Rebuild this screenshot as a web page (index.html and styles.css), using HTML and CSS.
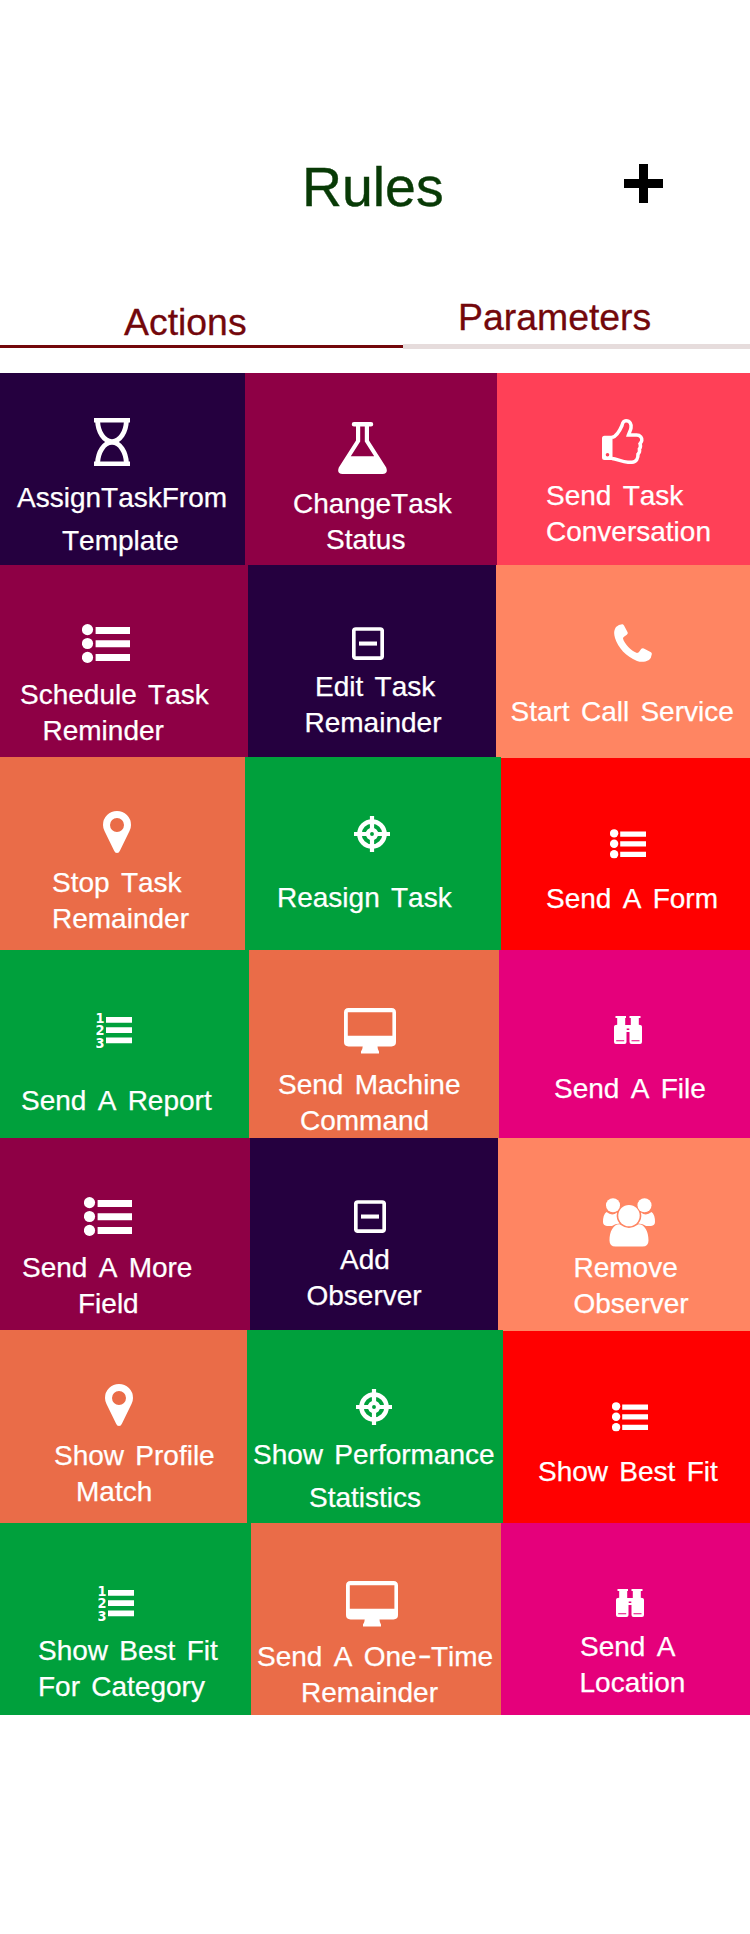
FILE: index.html
```html
<!DOCTYPE html>
<html lang="en">
<head>
<meta charset="utf-8">
<title>Rules</title>
<link rel="stylesheet" href="styles.css">
</head>
<body>
<svg class="sprite" aria-hidden="true">
  <symbol id="hourglass" viewBox="0 0 36 48"><path d="M0 0H36V4.6H0ZM0 43.4H36V48H0Z"/><path class="line" stroke-width="4.900" d="M3.6 3C4 14 10 23.6 18 23.6S32 14 32.4 3M3.6 45C4 34 10 24.4 18 24.4S32 34 32.4 45"/></symbol>
  <symbol id="flask" viewBox="0 0 49 52"><path fill-rule="evenodd" d="M16 0H33A2.2 2.2 0 0 1 33 4.5H31V18.5L48.2 45.5Q50.5 52 44.5 52H4.5Q-1.5 52 .8 45.5L18 18.5V4.5H16A2.2 2.2 0 0 1 16 0ZM22.2 4.5V19.5L12.8 34.3H36.2L26.8 19.5V4.5Z"/></symbol>
  <symbol id="thumb" viewBox="0 0 42 45"><path fill-rule="evenodd" d="M2.5 16.7H10.5V41H2.5Q0 41 0 38.5V19.2Q0 16.7 2.5 16.7ZM5.5 33.9A1.8 1.8 0 1 0 5.5 37.5A1.8 1.8 0 1 0 5.5 33.9Z"/><path class="line" stroke-width="3.500" d="M10 18.5C14.5 17.5 18.5 10 20 6.5C20.6 3.5 21.5 1.8 24 1.8C28 1.8 29.6 5 29 9C28.6 11.5 27 14 26.4 16H34.5C38.5 16 40.2 19 39.800 21.5C39.5 23.2 38.4 24 38 24.6C38.8 26.6 38.5 28.6 37.4 30C37.9 32 37.2 34 36 35.2C36.2 38.8 34.5 43.2 30 43.2H26C20 43.2 15 39.9 10 39.5"/></symbol>
  <symbol id="list" viewBox="0 0 48 39"><circle cx="5.5" cy="5.6" r="5.6"/><circle cx="5.5" cy="19.5" r="5.6"/><circle cx="5.5" cy="33.4" r="5.6"/><path d="M13.6 3H48V10H13.6ZM13.6 16.2H48V23.2H13.6ZM13.6 30H48V37H13.6Z"/></symbol>
  <symbol id="minus" viewBox="0 0 32 33"><rect class="line" stroke-width="3.700" x="1.8" y="2" width="28.4" height="29.2" rx="2"/><path d="M7 14.5H25V18.6H7Z"/></symbol>
  <symbol id="phone" viewBox="0 0 38 38"><path d="M2 3Q5 0 8.6 .2Q9.5 .4 10 1.4L13.6 8.2Q14 9.2 13.4 10C12 11.8 9 12.6 9 14.6C10 19.5 17.5 27.5 23 29C25.2 29 26 26 27.8 24.6Q28.8 23.8 29.8 24.4L37 28.2Q38 28.8 37.8 30.2Q37.3 34 35 36C31 38 27.5 38.5 23 37C12 32.5 4 23.5 1 14C-.3 9.5 -.2 6.5 2 3Z"/></symbol>
  <symbol id="pin" viewBox="0 0 28 42"><path fill-rule="evenodd" d="M14 0A14 14 0 0 1 28 14Q28 17 26.5 20L17 39.5Q16 42 14 42T11 39.5L1.5 20Q0 17 0 14A14 14 0 0 1 14 0ZM14 7A7 7 0 1 0 14 21A7 7 0 1 0 14 7Z"/></symbol>
  <symbol id="target" viewBox="0 0 36 36"><circle class="line" stroke-width="4.500" cx="18" cy="18" r="12.6"/><circle class="line" stroke-width="4.300" cx="18" cy="18" r="4.100"/><path d="M15.900 0H20.100V14H15.900ZM15.900 22H20.100V36H15.900ZM0 15.900H14V20.100H0ZM22 15.900H36V20.100H22Z"/></symbol>
  <symbol id="numbers" viewBox="0 0 36 37"><path d="M10 5H36V10.7H10ZM10 15.3H36V21H10ZM10 25.5H36V31.2H10Z"/><text class="digit" x="-.5" y="10.900" textLength="9" lengthAdjust="spacingAndGlyphs">1</text><text class="digit" x="-.5" y="23.400" textLength="9" lengthAdjust="spacingAndGlyphs">2</text><text class="digit" x="-.5" y="36.300" textLength="9" lengthAdjust="spacingAndGlyphs">3</text></symbol>
  <symbol id="monitor" viewBox="0 0 52 46"><path fill-rule="evenodd" d="M4.500 0H47.500Q52 0 52 4.500V34Q52 38.400 47.500 38.400H33.500Q33.500 41 35 43.500V45.500H17V43.500Q18.700 41 18.700 38.400H4.500Q0 38.400 0 34V4.500Q0 0 4.500 0ZM3.800 4.200V27.800H48.400V4.200Z"/></symbol>
  <symbol id="binoculars" viewBox="0 0 28 28"><path fill-rule="evenodd" d="M1.500 0H12V2H11.200V9H16.800V2H15.500V0H26.500V2H24.800V8.700Q28 8.700 28 11V26Q28 28 26 28H17.500Q15.500 28 15.500 26V16H12.500V26Q12.500 28 10.500 28H2Q0 28 0 26V11Q0 8.700 3.200 8.700V2H1.500ZM2.200 24.300V25.200H10.200V24.300ZM17.500 24.300V25.200H25.500V24.300ZM12.700 12.500V14H15.300V12.500Z"/></symbol>
  <symbol id="users" viewBox="0 0 52 49"><circle cx="10" cy="7.200" r="7"/><circle cx="41.500" cy="7.200" r="7"/><circle cx="26" cy="17.600" r="10.700"/><path d="M3.500 14Q9 18.500 14 14.500Q12.700 21 16.700 25.500Q12 25.500 9 28H4Q0 27.500 0 24Q0 16.500 3.500 14ZM48.500 14Q43 18.500 38 14.500Q39.300 21 35.300 25.500Q40 25.500 43 28H48Q52 27.500 52 24Q52 16.500 48.500 14ZM16.500 26.300Q26 33.500 35.500 26.300C42 26.300 45.500 34 45.500 42.500Q45.500 48.500 39.500 48.500H12.500Q6.500 48.500 6.500 42.500C6.500 34 10 26.300 16.500 26.300Z"/></symbol>
  <symbol id="plus" viewBox="0 0 39 39"><path d="M15 0H24V15H39V24H24V39H15V24H0V15H15Z"/></symbol>
</svg>

<header class="header">
  <h1 class="title">Rules</h1>
  <svg class="add"><use href="#plus"/></svg>
</header>
<nav class="tabs">
  <div class="tab active">Actions</div>
  <div class="tab inactive">Parameters</div>
</nav>

<main class="board">
  <div class="row row-1">
    <div class="tile navy assign"><svg class="icon"><use href="#hourglass"/></svg><div class="label"><div>AssignTaskFrom</div><div>Template</div></div></div>
    <div class="tile maroon change"><svg class="icon"><use href="#flask"/></svg><div class="label"><div>ChangeTask</div><div>Status</div></div></div>
    <div class="tile coral conversation"><svg class="icon"><use href="#thumb"/></svg><div class="label"><div>Send Task</div><div>Conversation</div></div></div>
  </div>
  <div class="row row-2">
    <div class="tile maroon schedule"><svg class="icon"><use href="#list"/></svg><div class="label"><div>Schedule Task</div><div>Reminder</div></div></div>
    <div class="tile navy edit"><svg class="icon"><use href="#minus"/></svg><div class="label"><div>Edit Task</div><div>Remainder</div></div></div>
    <div class="tile salmon call"><svg class="icon"><use href="#phone"/></svg><div class="label"><div>Start Call Service</div></div></div>
  </div>
  <div class="row row-3">
    <div class="tile orange stop"><svg class="icon"><use href="#pin"/></svg><div class="label"><div>Stop Task</div><div>Remainder</div></div></div>
    <div class="tile green reassign"><svg class="icon"><use href="#target"/></svg><div class="label"><div>Reasign Task</div></div></div>
    <div class="tile red form"><svg class="icon"><use href="#list"/></svg><div class="label"><div>Send A Form</div></div></div>
  </div>
  <div class="row row-4">
    <div class="tile green report"><svg class="icon"><use href="#numbers"/></svg><div class="label"><div>Send A Report</div></div></div>
    <div class="tile orange machine"><svg class="icon"><use href="#monitor"/></svg><div class="label"><div>Send Machine</div><div>Command</div></div></div>
    <div class="tile magenta file"><svg class="icon"><use href="#binoculars"/></svg><div class="label"><div>Send A File</div></div></div>
  </div>
  <div class="row row-5">
    <div class="tile maroon field"><svg class="icon"><use href="#list"/></svg><div class="label"><div>Send A More</div><div>Field</div></div></div>
    <div class="tile navy add-observer"><svg class="icon"><use href="#minus"/></svg><div class="label"><div>Add</div><div>Observer</div></div></div>
    <div class="tile salmon remove-observer"><svg class="icon"><use href="#users"/></svg><div class="label"><div>Remove</div><div>Observer</div></div></div>
  </div>
  <div class="row row-6">
    <div class="tile orange profile"><svg class="icon"><use href="#pin"/></svg><div class="label"><div>Show Profile</div><div>Match</div></div></div>
    <div class="tile green performance"><svg class="icon"><use href="#target"/></svg><div class="label"><div>Show Performance</div><div>Statistics</div></div></div>
    <div class="tile red best-fit"><svg class="icon"><use href="#list"/></svg><div class="label"><div>Show Best Fit</div></div></div>
  </div>
  <div class="row row-7">
    <div class="tile green category"><svg class="icon"><use href="#numbers"/></svg><div class="label"><div>Show Best Fit</div><div>For Category</div></div></div>
    <div class="tile orange one-time"><svg class="icon"><use href="#monitor"/></svg><div class="label"><div>Send A One<span class="dash">-</span>Time</div><div>Remainder</div></div></div>
    <div class="tile magenta location"><svg class="icon"><use href="#binoculars"/></svg><div class="label"><div>Send A</div><div>Location</div></div></div>
  </div>
</main>
</body>
</html>
```
FILE: styles.css
```css
* { box-sizing: border-box; }
body {
  margin: 0;
  min-height: 1934px;
  background: #fff;
  font-family: "Liberation Sans", Arial, sans-serif;
  font-kerning: none;
}
.sprite { display: none; }
.line { fill: none; stroke: currentColor; }
.digit { font: bold 14.6px "DejaVu Sans", sans-serif; }

.header {
  display: flex;
  align-items: flex-start;
  height: 290px;
  padding: 157px 0 0 302px;
}
.title {
  width: 322px;
  margin: 0;
  font-size: 55.4px;
  line-height: 60px;
  font-weight: 400;
  color: #083a06;
  -webkit-text-stroke: 0.4px currentColor;
}
.add { width: 39px; height: 39px; margin-top: 7px; fill: #000; }

.tabs {
  display: flex;
  align-items: flex-end;
  height: 83px;
  padding-bottom: 24px;
  color: #73070b;
  font-size: 37.4px;
  line-height: 42px;
  -webkit-text-stroke: 0.3px currentColor;
}
.tab { height: 48px; }
.active {
  width: 403px;
  height: 43px;
  margin-bottom: 1px;
  padding-left: 124px;
  box-shadow: inset 0 -3px #73070b;
  line-height: 34px;
}
.inactive {
  width: 347px;
  padding-left: 55px;
  border-bottom: 5px solid #e6dcdc;
  line-height: 33px;
}

.row { display: grid; height: 192px; }
.row-1 { grid-template-columns: 245px 252px 1fr; }
.row-2 { grid-template-columns: 248px 248px 1fr; }
.row-3 { grid-template-columns: 245px 256px 1fr; height: 193px; background: #ff8562; }
.row-4 { grid-template-columns: 249px 250px 1fr; height: 188px; }
.row-5 { grid-template-columns: 250px 248px 1fr; }
.row-6 { grid-template-columns: 247px 256px 1fr; height: 193px; background: #ff8562; }
.row-7 { grid-template-columns: 251px 250px 1fr; }
.row-3 .red, .row-6 .red { margin-top: 1px; }

.navy { background: #25003f; }
.maroon { background: #8e0045; }
.coral { background: #ff4057; }
.salmon { background: #ff8562; }
.orange { background: #ea6c48; }
.green { background: #00a03c; }
.red { background: #f00; }
.magenta { background: #e5007b; }

.tile {
  display: grid;
  grid-template-rows: var(--head) auto;
  align-content: start;
  color: #fff;
  font-size: 28px;
  line-height: 36px;
  word-spacing: 3.5px;
  white-space: nowrap;
}
.icon {
  width: var(--w);
  height: var(--h);
  margin: var(--iy) 0 0 var(--ix);
  fill: currentColor;
}
.label { padding-top: 1px; -webkit-text-stroke: 0.25px currentColor; }
.label div:first-child { padding-left: var(--a); }
.label div:last-child { padding-left: var(--b, var(--a)); }
.dash { display: inline-block; margin: 0 2px 0 3px; transform: scaleX(1.5) translateY(-2px); }

.assign { --w: 36px; --h: 48px; --ix: 94px; --iy: 45px; --head: 106px; --a: 17px; --b: 62px; }
.assign .label div:last-child, .performance .label div:last-child { margin-top: 7px; }
.change { --w: 49px; --h: 52px; --ix: 92.5px; --iy: 49px; --head: 112px; --a: 48px; --b: 81px; }
.conversation { --w: 42px; --h: 45px; --ix: 105px; --iy: 46px; --head: 104px; --a: 49px; }
.schedule { --w: 48px; --h: 39px; --ix: 82px; --iy: 59px; --head: 111px; --a: 20px; --b: 42.5px; }
.edit { --w: 32px; --h: 33px; --ix: 104px; --iy: 62px; --head: 103px; --a: 67px; --b: 56.5px; }
.call { --w: 38px; --h: 38px; --ix: 118px; --iy: 59px; --head: 128px; --a: 14.5px; }
.stop { --w: 28px; --h: 42px; --ix: 103px; --iy: 54px; --head: 107px; --a: 52px; }
.reassign { --w: 36px; --h: 36px; --ix: 109px; --iy: 59px; --head: 122px; --a: 32px; }
.form { --w: 36px; --h: 29.5px; --ix: 109px; --iy: 71px; --head: 122px; --a: 45px; }
.report { --w: 36px; --h: 37px; --ix: 96px; --iy: 62px; --head: 132px; --a: 21px; }
.machine { --w: 52px; --h: 46px; --ix: 95px; --iy: 58px; --head: 116px; --a: 29px; --b: 51px; }
.file { --w: 28px; --h: 28px; --ix: 115px; --iy: 66px; --head: 120px; --a: 55px; }
.field { --w: 48px; --h: 39px; --ix: 84px; --iy: 59px; --head: 111px; --a: 22px; --b: 78px; }
.add-observer { --w: 32px; --h: 33px; --ix: 104px; --iy: 62px; --head: 103px; --a: 90px; --b: 56.5px; }
.remove-observer { --w: 52px; --h: 49px; --ix: 105px; --iy: 60px; --head: 111px; --a: 75.5px; }
.profile { --w: 28px; --h: 42px; --ix: 105px; --iy: 54px; --head: 107px; --a: 54px; --b: 76px; }
.performance { --w: 36px; --h: 36px; --ix: 109px; --iy: 59px; --head: 106px; --a: 6px; --b: 62px; }
.best-fit { --w: 36px; --h: 29.5px; --ix: 109px; --iy: 71px; --head: 122px; --a: 35px; }
.category { --w: 36px; --h: 37px; --ix: 98px; --iy: 62px; --head: 109px; --a: 38px; }
.one-time { --w: 52px; --h: 46px; --ix: 95px; --iy: 58px; --head: 115px; --a: 6px; --b: 50px; }
.location { --w: 28px; --h: 28px; --ix: 115px; --iy: 66px; --head: 105px; --a: 79px; --b: 78.5px; }
```
